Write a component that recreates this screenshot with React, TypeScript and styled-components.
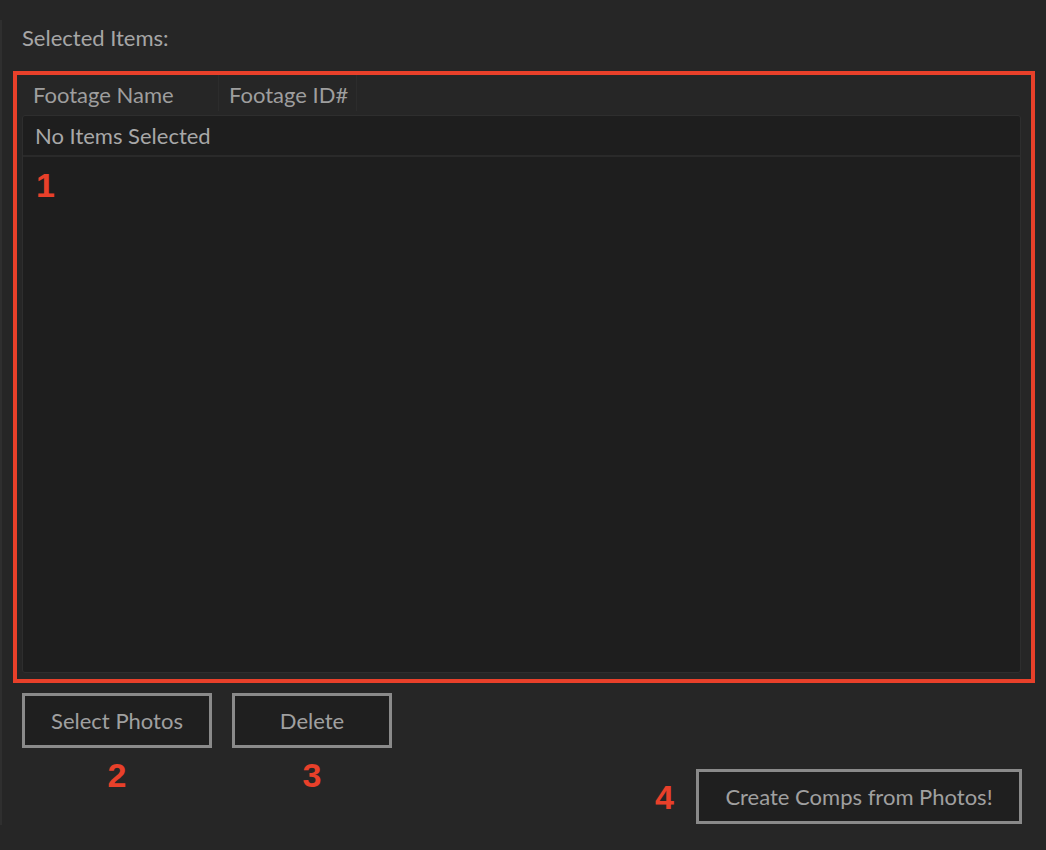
import styled, { createGlobalStyle } from "styled-components";

const GlobalStyle = createGlobalStyle`
  html, body {
    margin: 0;
    padding: 0;
    background: #262626;
  }
  body {
    font-family: Lato, "Open Sans", sans-serif;
    width: 1046px;
    height: 850px;
    overflow: hidden;
  }
`;

const columns = [
  { name: "Footage Name", width: 202 },
  { name: "Footage ID#", width: 138 },
];

export default function App() {
  return (
    <>
      <GlobalStyle />
      <Panel>
        <Title>Selected Items:</Title>
        <Highlight>
          <HeaderRow>
            {columns.map((col) => (
              <HeaderCell key={col.name} $width={col.width}>
                {col.name}
              </HeaderCell>
            ))}
          </HeaderRow>
          <List>
            <ListRow>No Items Selected</ListRow>
            <ListBody>
              <Marker>1</Marker>
            </ListBody>
          </List>
        </Highlight>
        <Footer>
          <LeftActions>
            <ActionColumn>
              <Button $width={190}>Select Photos</Button>
              <Marker>2</Marker>
            </ActionColumn>
            <ActionColumn>
              <Button $width={160}>Delete</Button>
              <Marker>3</Marker>
            </ActionColumn>
          </LeftActions>
          <RightActions>
            <Marker>4</Marker>
            <Button $width={326}>Create Comps from Photos!</Button>
          </RightActions>
        </Footer>
      </Panel>
    </>
  );
}

const Panel = styled.div`
  margin-top: 20px;
  height: 805px;
  box-sizing: border-box;
  border-left: 2px solid #2f2f2f;
  display: flex;
  flex-direction: column;
`;

const Title = styled.div`
  padding: 5px 0 0 20px;
  height: 51px;
  box-sizing: border-box;
  font-size: 22px;
  line-height: 26px;
  color: #a6a6a6;
`;

const Highlight = styled.div`
  margin-left: 11px;
  width: 1022px;
  height: 612px;
  box-sizing: border-box;
  border: 4px solid #e8402a;
  display: flex;
  flex-direction: column;
`;

const HeaderRow = styled.div`
  display: flex;
  height: 40px;
  flex-shrink: 0;
`;

const HeaderCell = styled.div<{ $width: number }>`
  width: ${(p) => p.$width}px;
  box-sizing: border-box;
  padding: 4px 0 0 10px;
  height: 36px;
  font-size: 22px;
  line-height: 32px;
  color: #9e9e9e;
  border-right: 1px solid #2c2c2c;
  &:first-child {
    padding-left: 16px;
  }
`;

const List = styled.div`
  margin: 0 10px 6px 5px;
  flex: 1;
  background: #1e1e1e;
  border: 1px solid #2e2e2e;
  border-radius: 3px;
  display: flex;
  flex-direction: column;
`;

const ListRow = styled.div`
  height: 41px;
  box-sizing: border-box;
  padding-left: 12px;
  font-size: 22px;
  line-height: 40px;
  color: #a8a8a8;
  border-bottom: 2px solid #2a2a2a;
`;

const ListBody = styled.div`
  flex: 1;
  padding: 8px 0 0 13px;
`;

const Marker = styled.div`
  font-family: "Liberation Sans", Arial, sans-serif;
  font-weight: 700;
  font-size: 34px;
  line-height: 40px;
  color: #e8402a;
`;

const Footer = styled.div`
  display: flex;
  justify-content: space-between;
  padding: 10px 24px 0 20px;
`;

const LeftActions = styled.div`
  display: flex;
  gap: 20px;
`;

const ActionColumn = styled.div`
  display: flex;
  flex-direction: column;
  align-items: center;
  gap: 7px;
`;

const RightActions = styled.div`
  display: flex;
  align-items: center;
  gap: 22px;
  margin-top: 76px;
`;

const Button = styled.button<{ $width: number }>`
  width: ${(p) => p.$width}px;
  height: 55px;
  box-sizing: border-box;
  background: #1f1f1f;
  border: 3px solid #8a8a8a;
  color: #a0a0a0;
  font-family: Lato, "Open Sans", sans-serif;
  font-size: 22px;
  padding: 0;
  cursor: pointer;
`;
